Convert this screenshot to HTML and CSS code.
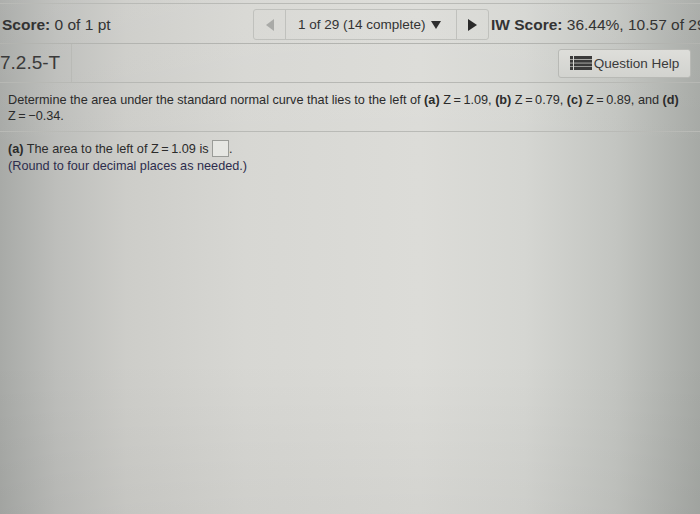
FILE: index.html
```html
<!DOCTYPE html>
<html>
<head>
<meta charset="utf-8">
<link rel="stylesheet" href="styles.css">
</head>
<body>
<div class="page">
  <div class="topbar">
    <div class="score"><b>Score:</b> 0 of 1 pt</div>
    <div class="nav">
      <div class="nav-prev"><span class="tri-left"></span></div>
      <div class="nav-mid">1 of 29 (14 complete) <span class="tri-down"></span></div>
      <div class="nav-next"><span class="tri-right"></span></div>
    </div>
    <div class="hw"><b>IW Score:</b> 36.44%, 10.57 of 29</div>
  </div>
  <div class="idbar">
    <div class="qid">7.2.5-T</div>
    <div class="help">
      <svg class="help-icon" width="22" height="14" viewBox="0 0 22 14">
        <rect x="0" y="0" width="3" height="3" fill="#3a3a3a"/>
        <rect x="4" y="0" width="18" height="3" fill="#3a3a3a"/>
        <rect x="0" y="3.7" width="3" height="3" fill="#3a3a3a"/>
        <rect x="4" y="3.7" width="18" height="3" fill="#3a3a3a"/>
        <rect x="0" y="7.4" width="3" height="3" fill="#3a3a3a"/>
        <rect x="4" y="7.4" width="18" height="3" fill="#3a3a3a"/>
        <rect x="0" y="11" width="3" height="3" fill="#3a3a3a"/>
        <rect x="4" y="11" width="18" height="3" fill="#3a3a3a"/>
      </svg>
      <span>Question Help</span>
    </div>
  </div>
  <div class="question">
    Determine the area under the standard normal curve that lies to the left of <b>(a)</b> Z&thinsp;=&thinsp;1.09, <b>(b)</b> Z&thinsp;=&thinsp;0.79, <b>(c)</b> Z&thinsp;=&thinsp;0.89, and <b>(d)</b><br>
    Z&thinsp;=&thinsp;&minus;0.34.
  </div>
  <div class="answer">
    <div><b>(a)</b> The area to the left of Z&thinsp;=&thinsp;1.09 is <span class="box"></span>.</div>
    <div class="hint">(Round to four decimal places as needed.)</div>
  </div>
</div>
</body>
</html>
```
FILE: styles.css
```css
html, body {
  margin: 0;
  padding: 0;
  height: 100%;
}
body {
  font-family: "Liberation Sans", Arial, sans-serif;
  color: #2e2e2e;
  background:
    linear-gradient(180deg, rgba(255,255,255,0.06) 0%, rgba(255,255,255,0) 30%, rgba(0,0,0,0) 70%, rgba(0,0,0,0.04) 100%),
    linear-gradient(90deg, #a8aaa7 0%, #bdbebb 8%, #cdcdc9 18%, #d7d7d3 35%, #dcdcd8 60%, #d5d6d2 75%, #c3c5c1 88%, #a6a9a5 100%);
  overflow: hidden;
}
.page {
  height: 514px;
}
.topbar {
  margin-top: 3px;
  border-top: 1px solid #b9bab6;
  border-bottom: 1px solid #b3b4b0;
  height: 39px;
  display: flex;
  align-items: center;
  white-space: nowrap;
}
.score {
  width: 251px;
  padding-left: 2px;
  font-size: 15.5px;
  color: #333;
  flex-shrink: 0;
  margin-top: 3px;
}
.nav {
  display: flex;
  height: 29px;
  border: 1px solid #c0c1bd;
  border-radius: 3px;
  flex-shrink: 0;
  margin-top: 2px;
}
.nav-prev {
  width: 31px;
  border-right: 1px solid #c0c1bd;
  display: flex;
  align-items: center;
  justify-content: center;
}
.tri-left {
  width: 0; height: 0;
  border-top: 6px solid transparent;
  border-bottom: 6px solid transparent;
  border-right: 8px solid #a9aaa7;
}
.nav-mid {
  width: 171px;
  border-right: 1px solid #c0c1bd;
  display: flex;
  align-items: center;
  padding-left: 12px;
  box-sizing: border-box;
  font-size: 13.5px;
  color: #333;
}
.tri-down {
  display: inline-block;
  margin-left: 5px;
  width: 0; height: 0;
  border-left: 5px solid transparent;
  border-right: 5px solid transparent;
  border-top: 8px solid #2e2e2e;
}
.nav-next {
  width: 31px;
  display: flex;
  align-items: center;
  justify-content: center;
}
.tri-right {
  width: 0; height: 0;
  border-top: 6px solid transparent;
  border-bottom: 6px solid transparent;
  border-left: 9px solid #2a2a2a;
}
.hw {
  margin-left: 2px;
  font-size: 15.5px;
  color: #333;
  margin-top: 2px;
}
.idbar {
  display: flex;
  align-items: center;
  height: 38px;
  border-bottom: 1px solid #b7b8b4;
}
.qid {
  width: 71px;
  height: 100%;
  border-right: 1px solid #b9bab6;
  font-size: 19px;
  color: #3a3a3a;
  display: flex;
  align-items: center;
}
.help {
  margin-left: auto;
  margin-right: 9px;
  width: 133px;
  height: 29px;
  box-sizing: border-box;
  border: 1px solid #b8b9b5;
  border-radius: 3px;
  background: linear-gradient(#dededa, #d2d3cf);
  display: flex;
  align-items: center;
  justify-content: center;
  gap: 2px;
  font-size: 13.5px;
  color: #3a3a3a;
}
.help-icon {
  display: block;
}
.question {
  padding: 10px 8px 7px;
  font-size: 12.7px;
  line-height: 15.5px;
  color: #2b2b2b;
  border-bottom: 1px solid #b9bab6;
}
.answer {
  padding: 8px 8px;
  font-size: 12.7px;
  line-height: 17px;
  color: #2b2b2b;
}
.box {
  display: inline-block;
  width: 15px;
  height: 15px;
  border: 1px solid #9a9c98;
  background: #e6e7e3;
  vertical-align: -4px;
}
.hint {
  color: #2d2d4d;
}
```
